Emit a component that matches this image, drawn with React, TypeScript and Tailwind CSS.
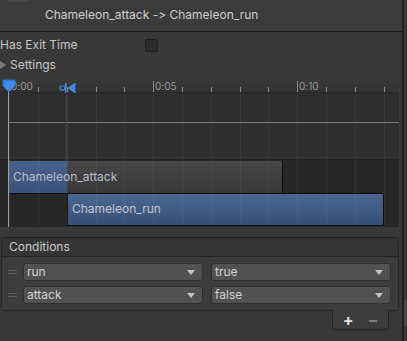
import React from 'react';

const MAJOR = [
    { x: 9, label: '0:00' },
    { x: 153, label: '0:05' },
    { x: 297, label: '0:10' },
];
const MINOR = [38, 67, 96, 124, 182, 211, 240, 268, 326, 355, 384];
const ALL_TICKS = [...MAJOR.map((m) => m.x), ...MINOR];

function Dropdown({ value }: { value: string }) {
    return (
        <div className="w-[180px] h-[18px] flex items-center justify-between pl-[3px] pr-[7px] bg-[#515151] border border-[#2f2f2f] rounded-[3px] text-[12px] text-[#d2d2d2]">
            <span>{value}</span>
            <svg width="8" height="5" viewBox="0 0 8 5">
                <path d="M0 0 L8 0 L4 5 Z" fill="#c4c4c4" />
            </svg>
        </div>
    );
}

function ConditionRow({ param, value }: { param: string; value: string }) {
    return (
        <div className="flex items-center h-[18px]">
            <div className="w-[21px] flex flex-col items-center gap-[2px]">
                <div className="w-[9px] h-[1px] bg-[#5f5f5f]" />
                <div className="w-[9px] h-[1px] bg-[#5f5f5f]" />
            </div>
            <div className="flex gap-[8px]">
                <Dropdown value={param} />
                <Dropdown value={value} />
            </div>
        </div>
    );
}

export default function App() {
    return (
        <div
            className="w-[407px] h-[341px] bg-[#383838] flex overflow-hidden text-[#c4c4c4] [font-variant-ligatures:none]"
            style={{ fontFamily: 'Inter, "Noto Sans", sans-serif' }}
        >
            <div className="w-[402px] flex flex-col">
                {/* Transition header */}
                <div className="h-[31px] bg-[#3b3b3b] flex flex-col">
                    <div className="w-[20px] h-[2px] ml-[8px] bg-[#4a4a4a]" />
                    <div className="pl-[45px] mt-[5px] text-[12px] leading-[16px] text-[#cfcfcf]">
                        Chameleon_attack -&gt; Chameleon_run
                    </div>
                </div>
                <div className="h-[1px] bg-[#1d1d1d]" />

                {/* Has Exit Time */}
                <div className="h-[22px] flex items-center mt-[2px] text-[12px]">
                    <span className="w-[145px]">Has Exit Time</span>
                    <div className="w-[13px] h-[13px] bg-[#2b2b2b] border border-[#1e1e1e] rounded-[2px]" />
                </div>

                {/* Settings foldout */}
                <div className="h-[18px] flex items-center text-[12px]">
                    <svg width="6" height="8" viewBox="0 0 6 8" className="mr-[4px]">
                        <path d="M0 0 L6 4 L0 8 Z" fill="#7a7a7a" />
                    </svg>
                    <span>Settings</span>
                </div>

                {/* Timeline */}
                <div className="mt-[3px] w-[399px] h-[150px] flex flex-col relative">
                    {/* ruler */}
                    <div className="h-[16px] bg-gradient-to-b from-[#3a3a3a] to-[#323232] relative border-b border-[#292929]">
                        {MAJOR.map((m) => (
                            <div key={m.x} className="absolute top-[4px] flex items-start" style={{ left: m.x }}>
                                <div className="w-[1px] h-[11px] bg-[#8a8a8a]" />
                                <span className="ml-[1px] text-[10px] leading-[11px] text-[#9a9a9a]">{m.label}</span>
                            </div>
                        ))}
                        {MINOR.map((x) => (
                            <div key={x} className="absolute top-[10px] w-[1px] h-[5px] bg-[#8a8a8a]" style={{ left: x }} />
                        ))}
                    </div>

                    {/* upper body */}
                    <div className="h-[64px] bg-[#2e2e2e] relative">
                        <div className="absolute left-[9px] right-0 top-[29px] h-[1px] bg-[#7c7c7c]" />
                    </div>
                    <div className="h-[3px] bg-[#333333] border-b border-[#222222]" />

                    {/* lower body with clips */}
                    <div className="flex-1 bg-[#272727] relative">
                        <div className="absolute left-[9px] top-[1px] w-[274px] h-[33px] flex border-r border-b border-[#0c0c0c] bg-gradient-to-b from-[#474747] to-[#383838]">
                            <div className="w-[58px] h-full bg-gradient-to-b from-[#46618a] to-[#3a537a]" />
                            <span className="absolute left-[4px] top-[8px] text-[12px] leading-[16px] text-[#b8bcc4]">
                                Chameleon_attack
                            </span>
                        </div>
                        <div className="absolute left-[67px] top-[33px] w-[317px] h-[33px] border border-[#0c0c0c] bg-gradient-to-b from-[#4b6890] to-[#374f74]">
                            <span className="absolute left-[4px] top-[7px] text-[12px] leading-[16px] text-[#c2c6ce]">
                                Chameleon_run
                            </span>
                        </div>
                    </div>

                    {/* grid lines */}
                    {ALL_TICKS.map((x) => (
                        <div key={x} className="absolute top-[17px] bottom-[1px] w-[1px] bg-[#ffffff0d]" style={{ left: x }} />
                    ))}
                    {/* transition start line */}
                    <div className="absolute left-[66px] top-[17px] h-[67px] w-[1px] bg-[#33435a]" />
                    {/* playhead */}
                    <div className="absolute left-[8px] top-[14px] bottom-[0px] w-[1px] bg-[#9c9c9c]" />
                    <svg className="absolute left-[2px] top-[2px]" width="14" height="14" viewBox="0 0 14 14">
                        <path d="M1 1 L13 1 L13 7 L7 13 L1 7 Z" fill="#3d8be6" stroke="#2a6ec0" strokeWidth="1" />
                    </svg>
                    {/* transition marker */}
                    <svg className="absolute left-[59px] top-[6px]" width="17" height="10" viewBox="0 0 17 10">
                        <ellipse cx="3.5" cy="5" rx="2.5" ry="2" fill="none" stroke="#3d8be6" strokeWidth="1.2" />
                        <rect x="6" y="0" width="1.5" height="10" fill="#3d8be6" />
                        <path d="M8.5 5 L15 0.5 L15 9.5 Z" fill="#3d8be6" />
                        <rect x="15" y="0" width="1.5" height="10" fill="#3d8be6" />
                    </svg>
                </div>

                {/* Conditions list */}
                <div className="mt-[10px] ml-[1px] w-[398px] border border-[#242424] rounded-[4px] overflow-hidden">
                    <div className="h-[19px] bg-[#343434] border-b border-[#242424] flex items-center pl-[7px] text-[12px] text-[#cccccc]">
                        Conditions
                    </div>
                    <div className="bg-[#3c3c3c] pt-[6px] pb-[6px] flex flex-col gap-[5px]">
                        <ConditionRow param="run" value="true" />
                        <ConditionRow param="attack" value="false" />
                    </div>
                </div>
                <div className="flex justify-end pr-[13px]">
                    <div className="w-[57px] h-[20px] -mt-[1px] bg-[#3c3c3c] border border-t-0 border-[#242424] rounded-b-[4px] flex items-center justify-center gap-[14px]">
                        <span className="text-[16px] leading-[16px] font-bold text-[#e0e0e0]">+</span>
                        <span className="text-[16px] leading-[16px] font-bold text-[#7a7a7a]">−</span>
                    </div>
                </div>
            </div>

            {/* scrollbar strip */}
            <div className="w-[2px] bg-[#1f1f1f]" />
            <div className="w-[3px] flex flex-col bg-[#383838]">
                <div className="h-[300px]" />
                <div className="h-[26px] bg-[#474747]" />
            </div>
        </div>
    );
}
